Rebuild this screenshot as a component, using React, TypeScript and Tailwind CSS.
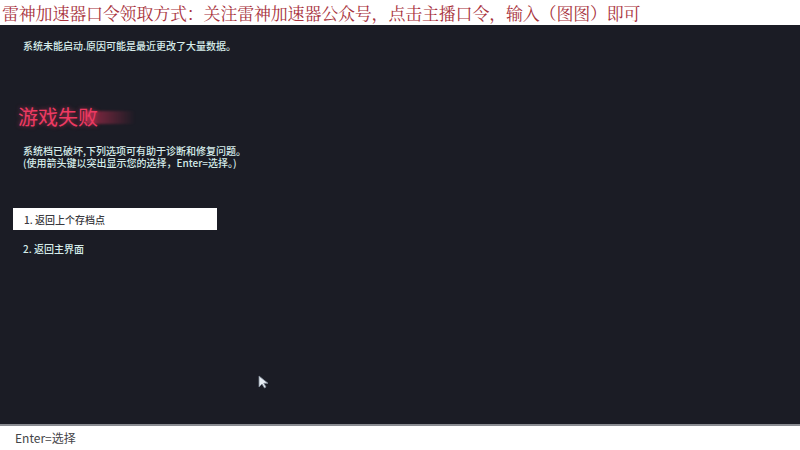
const cjk = '"Noto Sans CJK SC", "Noto Sans", sans-serif';

export default function App() {
  return (
    <div className="flex h-[450px] w-[800px] flex-col overflow-hidden bg-white" style={{ fontFamily: cjk }}>
      {/* top caption */}
      <div className="flex h-[25px] shrink-0 items-center bg-white pl-[2px]">
        <p
          className="whitespace-nowrap text-[17px] leading-none tracking-[-0.2px] text-[#a8323c]"
          style={{ fontFamily: '"Noto Serif CJK SC", "Liberation Serif", "Noto Sans CJK SC", serif' }}
        >
          雷神加速器口令领取方式：关注雷神加速器公众号，点击主播口令，输入（图图）即可
        </p>
      </div>

      {/* game screen */}
      <div className="relative flex flex-1 flex-col border-b-2 border-[#8a8c92] bg-[#1b1c25] px-[13px]">
        <p className="mt-[15px] pl-[10px] text-[10px] font-medium leading-[12px] text-[#d6ecea]">
          系统未能启动.原因可能是最近更改了大量数据。
        </p>

        <div className="relative mt-[52px] h-[26px] w-[120px]">
          <div className="absolute left-[72px] top-[7px] h-[13px] w-[50px] bg-gradient-to-r from-[#e0335a]/60 to-transparent blur-[1px]" />
          <h1
            className="relative pl-[5px] text-[20px] font-normal leading-[26px] text-[#ee3a62]"
            style={{ textShadow: '0 0 4px rgba(238,58,98,0.6)' }}
          >
            游戏失败
          </h1>
        </div>

        <div className="mt-[15px] flex flex-col pl-[10px] text-[10px] font-medium leading-[12px] text-[#d6ecea]">
          <p className="h-[12px]">系统档已破坏,下列选项可有助于诊断和修复问题。</p>
          <p className="h-[12px]">(使用箭头键以突出显示您的选择，Enter=选择。)</p>
        </div>

        <div className="mt-[39px] flex h-[22px] w-[204px] items-center bg-white pl-[11px] text-[10px] font-medium text-[#3a3a40]">
          1. 返回上个存档点
        </div>
        <div className="mt-[13px] pl-[10px] text-[10px] font-medium leading-[12px] text-[#d6ecea]">
          2. 返回主界面
        </div>

        {/* mouse cursor */}
        <svg className="absolute left-[258px] top-[350px]" width="12" height="14" viewBox="0 0 12 14">
          <path d="M1 1 L1 12 L4 9 L6.5 13 L8 12 L5.8 8.3 L10 8.3 Z" fill="#e8eef4" stroke="#7e8894" strokeWidth="0.8" />
        </svg>
      </div>

      {/* bottom hint */}
      <div className="flex h-[24px] shrink-0 items-center bg-white pl-[15px]">
        <span className="text-[12px] text-[#444448]">Enter=选择</span>
      </div>
    </div>
  );
}
